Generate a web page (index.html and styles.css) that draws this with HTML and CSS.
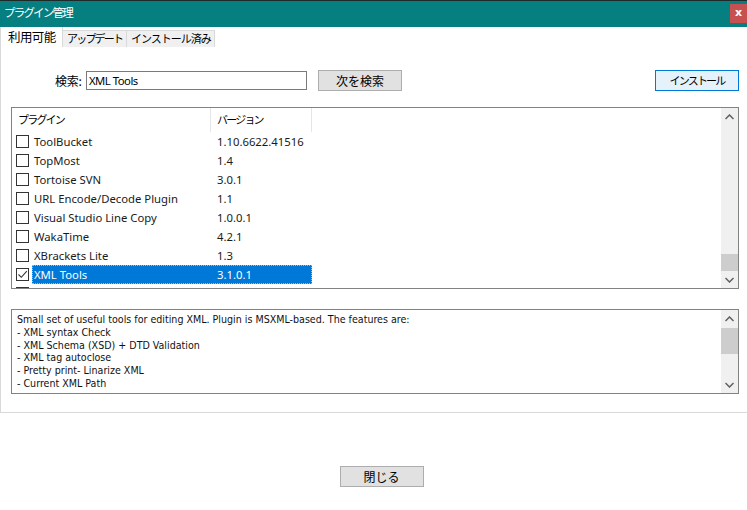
FILE: index.html
```html
<!DOCTYPE html>
<html lang="ja">
<head>
<meta charset="utf-8">
<title>プラグイン管理</title>
<link rel="stylesheet" href="styles.css">
</head>
<body>
<div class="window">
  <div class="titlebar">
    <span class="title">プラグイン管理</span>
    <span class="close">x</span>
  </div>
  <div class="tabs">
    <div class="tab active">利用可能</div>
    <div class="tab tab-update">アップデート</div>
    <div class="tab">インストール済み</div>
  </div>
  <div class="panel">
    <div class="search-row">
      <label class="search-label">検索:</label>
      <div class="input">XML Tools</div>
      <div class="btn btn-next">次を検索</div>
      <div class="spacer"></div>
      <div class="btn btn-install">インストール</div>
    </div>
    <div class="list">
      <div class="list-body">
        <div class="list-head">
          <div class="h-name">プラグイン</div>
          <div class="h-ver">バージョン</div>
        </div>
        <div class="row"><span class="cb"></span><div class="cells"><span class="c-name">ToolBucket</span><span class="c-ver">1.10.6622.41516</span></div></div>
        <div class="row"><span class="cb"></span><div class="cells"><span class="c-name">TopMost</span><span class="c-ver">1.4</span></div></div>
        <div class="row"><span class="cb"></span><div class="cells"><span class="c-name">Tortoise SVN</span><span class="c-ver">3.0.1</span></div></div>
        <div class="row"><span class="cb"></span><div class="cells"><span class="c-name">URL Encode/Decode Plugin</span><span class="c-ver">1.1</span></div></div>
        <div class="row"><span class="cb"></span><div class="cells"><span class="c-name">Visual Studio Line Copy</span><span class="c-ver">1.0.0.1</span></div></div>
        <div class="row"><span class="cb"></span><div class="cells"><span class="c-name">WakaTime</span><span class="c-ver">4.2.1</span></div></div>
        <div class="row"><span class="cb"></span><div class="cells"><span class="c-name">XBrackets Lite</span><span class="c-ver">1.3</span></div></div>
        <div class="row selected"><span class="cb checked"><svg width="11" height="11" viewBox="0 0 11 11"><path d="M1.5 5.5 L4.3 8.3 L9.8 2.2" fill="none" stroke="#333" stroke-width="1.1"/></svg></span><div class="cells"><span class="c-name">XML Tools</span><span class="c-ver">3.1.0.1</span></div></div>
        <div class="row"><span class="cb"></span><div class="cells"><span class="c-name"></span><span class="c-ver"></span></div></div>
      </div>
      <div class="scrollbar">
        <div class="arrow"><svg width="9" height="6" viewBox="0 0 9 6"><path d="M0.5 5 L4.5 1 L8.5 5" fill="none" stroke="#606060" stroke-width="1.5"/></svg></div>
        <div class="track"><div class="thumb thumb-list"></div></div>
        <div class="arrow"><svg width="9" height="6" viewBox="0 0 9 6"><path d="M0.5 1 L4.5 5 L8.5 1" fill="none" stroke="#606060" stroke-width="1.5"/></svg></div>
      </div>
    </div>
    <div class="desc">
      <div class="desc-text">
        <div>Small set of useful tools for editing XML. Plugin is MSXML-based. The features are:</div>
        <div>- XML syntax Check</div>
        <div>- XML Schema (XSD) + DTD Validation</div>
        <div>- XML tag autoclose</div>
        <div>- Pretty print- Linarize XML</div>
        <div>- Current XML Path</div>
      </div>
      <div class="scrollbar">
        <div class="arrow"><svg width="9" height="6" viewBox="0 0 9 6"><path d="M0.5 5 L4.5 1 L8.5 5" fill="none" stroke="#606060" stroke-width="1.5"/></svg></div>
        <div class="track"><div class="thumb thumb-desc"></div></div>
        <div class="arrow"><svg width="9" height="6" viewBox="0 0 9 6"><path d="M0.5 1 L4.5 5 L8.5 1" fill="none" stroke="#606060" stroke-width="1.5"/></svg></div>
      </div>
    </div>
  </div>
  <div class="footer">
    <div class="btn btn-close">閉じる</div>
  </div>
</div>
</body>
</html>
```

FILE: styles.css
```css
* { box-sizing: border-box; }
html, body { margin: 0; padding: 0; background: #fff; }
body {
  font-family: "Noto Sans", "Noto Sans CJK JP", sans-serif;
  font-size: 12px;
  color: #000;
}
.window { width: 747px; height: 510px; overflow: hidden; background: #fff; }

.titlebar {
  height: 27px;
  border-top: 1px solid #1e2a2a;
  background: #067f81;
  display: flex;
  align-items: flex-start;
  justify-content: space-between;
}
.title {
  color: #fff;
  font-family: "Noto Sans CJK JP", sans-serif;
  font-size: 11.5px;
  letter-spacing: -1.8px;
  line-height: 22px;
  padding-left: 4px;
  white-space: nowrap;
}
.close {
  margin-top: 3px;
  width: 17px;
  height: 19px;
  background: #c75050;
  color: #fff;
  font-family: "DejaVu Sans", sans-serif;
  font-weight: bold;
  font-size: 11px;
  line-height: 17px;
  text-align: center;
}

.tabs {
  height: 20px;
  display: flex;
  align-items: flex-end;
}
.tab {
  height: 17px;
  padding: 0 0 0 4px;
  background: #f0f0f0;
  border: 1px solid #d9d9d9;
  border-bottom: none;
  margin-left: -1px;
  font-family: "Noto Sans CJK JP", sans-serif;
  font-size: 11px;
  letter-spacing: -1px;
  line-height: 15px;
  white-space: nowrap;
  overflow: hidden;
}
.tab.tab-update { letter-spacing: -1.8px; }
.tab.active {
  height: 20px;
  width: 63px;
  margin-left: 0;
  background: #fff;
  border-left: 1px solid #d9d9d9;
  border-right: 1px solid #d9d9d9;
  border-top: none;
  padding-left: 7px;
  font-size: 12.5px;
  letter-spacing: -0.6px;
  line-height: 19px;
  position: relative;
  z-index: 1;
}
.tab:nth-child(2) { width: 65px; }
.tab:nth-child(3) { width: 89px; }

.panel {
  height: 366px;
  border-left: 1px solid #d9d9d9;
  border-bottom: 1px solid #d9d9d9;
  padding: 23px 8px 0 10px;
}

.search-row {
  display: flex;
  align-items: center;
  height: 21px;
}
.search-label {
  margin-left: 44px;
  width: 31px;
  font-family: "Noto Sans CJK JP", sans-serif;
  font-size: 12px;
  letter-spacing: -0.3px;
  white-space: nowrap;
}
.input {
  width: 221px;
  height: 19px;
  border: 1px solid #7a7a7a;
  padding-left: 2px;
  font-size: 11.3px;
  line-height: 17px;
  letter-spacing: -0.5px;
}
.btn {
  height: 21px;
  width: 84px;
  border: 1px solid #adadad;
  background: #e1e1e1;
  text-align: center;
  font-family: "Noto Sans CJK JP", sans-serif;
  font-size: 12px;
  line-height: 19px;
  white-space: nowrap;
}
.btn-next { margin-left: 11px; }
.spacer { flex: 1; }
.btn-install {
  background: #e5f1fb;
  border-color: #0078d7;
  font-size: 11px;
  letter-spacing: -1.8px;
}

.list {
  margin-top: 16px;
  height: 182px;
  border: 1px solid #828282;
  display: flex;
  overflow: hidden;
}
.list-body { flex: 1; overflow: hidden; }
.list-head {
  height: 24px;
  display: flex;
  font-family: "Noto Sans CJK JP", sans-serif;
  font-size: 11px;
  letter-spacing: -1.8px;
  line-height: 22px;
  white-space: nowrap;
}
.h-name { width: 199px; padding-left: 6px; border-right: 1px solid #e5e5e5; }
.h-ver { width: 101px; padding-left: 6px; border-right: 1px solid #e5e5e5; }

.row {
  height: 19px;
  display: flex;
  align-items: center;
}
.cb {
  width: 13px;
  height: 13px;
  border: 1px solid #333;
  margin-left: 4px;
  margin-right: 3px;
  background: #fff;
  display: flex;
  align-items: center;
  justify-content: center;
}
.cells {
  display: flex;
  height: 19px;
  line-height: 19px;
  color: #1a1a1a;
  font-size: 11.3px;
  white-space: nowrap;
}
.c-name { width: 179px; padding-left: 2px; }
.c-ver { width: 101px; padding-left: 6px; }
.row.selected .cells {
  background: #0078d7;
  color: #fff;
  outline: 1px dotted #f0b050;
  outline-offset: -1px;
}

.scrollbar {
  width: 17px;
  background: #f0f0f0;
  display: flex;
  flex-direction: column;
}
.arrow {
  height: 17px;
  display: flex;
  align-items: center;
  justify-content: center;
}
.track { flex: 1; }
.thumb { background: #cdcdcd; }
.thumb-list { margin-top: 129px; height: 17px; }
.thumb-desc { margin-top: 1px; height: 26px; }

.desc {
  margin-top: 20px;
  height: 85px;
  border: 1px solid #828282;
  display: flex;
}
.desc-text {
  flex: 1;
  padding: 3px 0 0 5px;
  font-family: "DejaVu Sans", sans-serif;
  font-stretch: condensed;
  font-size: 10.6px;
  line-height: 12.8px;
  letter-spacing: 0;
  white-space: nowrap;
  color: #111;
}

.footer {
  display: flex;
  justify-content: center;
  padding-top: 53px;
  padding-left: 16px;
}
.btn-close { width: 84px; }
```
